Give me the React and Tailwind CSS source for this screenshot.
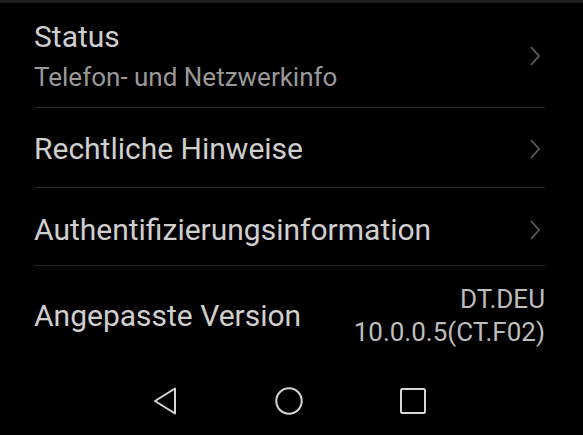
import React from 'react';

function Chevron() {
  return (
    <svg width="12" height="22" viewBox="0 0 12 22" className="shrink-0">
      <polyline points="2,2 10,11 2,20" fill="none" stroke="#5c5c5c" strokeWidth="1.8" />
    </svg>
  );
}

function Row({ title, subtitle, className }) {
  return (
    <div className={`flex items-center justify-between border-b border-[#262626] ${className}`}>
      <div className="flex flex-col">
        <span className="text-[30px] leading-[36px] text-[#cfcfcf]">{title}</span>
        {subtitle && <span className="text-[26px] leading-[34px] text-[#999999] mt-[5px]">{subtitle}</span>}
      </div>
      <div className="pr-[4px]">
        <Chevron />
      </div>
    </div>
  );
}

export default function App() {
  return (
    <div className="w-[583px] h-[435px] bg-black flex flex-col overflow-hidden" style={{ fontFamily: 'Roboto, "Noto Sans", sans-serif' }}>
      <div className="h-[3px] bg-[#1c1c1c]" />

      {/* Settings list */}
      <div className="flex flex-col pl-[34px] pr-[38px]">
        <Row title="Status" subtitle="Telefon- und Netzwerkinfo" className="h-[105px] pt-[2px]" />
        <Row title="Rechtliche Hinweise" className="h-[80px] pt-[3px]" />
        <Row title="Authentifizierungsinformation" className="h-[78px] pt-[6px]" />
        <div className="flex items-center justify-between h-[100px]">
          <span className="text-[30px] leading-[36px] text-[#cfcfcf]">Angepasste Version</span>
          <div className="flex flex-col items-end text-[26px] leading-[33px] text-[#bdbdbd]">
            <span>DT.DEU</span>
            <span>10.0.0.5(CT.F02)</span>
          </div>
        </div>
      </div>

      {/* Navigation bar */}
      <div className="flex-1 flex items-center justify-center pr-[5px]">
        <div className="w-[124px] flex justify-center">
          <svg width="26" height="28" viewBox="0 0 26 28">
            <polygon points="23,1.5 23,26.5 3,14" fill="none" stroke="#d6d6d6" strokeWidth="2" strokeLinejoin="round" />
          </svg>
        </div>
        <div className="w-[124px] flex justify-center">
          <svg width="28" height="28" viewBox="0 0 28 28">
            <circle cx="14" cy="14" r="12.7" fill="none" stroke="#d6d6d6" strokeWidth="2" />
          </svg>
        </div>
        <div className="w-[124px] flex justify-center">
          <svg width="26" height="26" viewBox="0 0 26 26">
            <rect x="1" y="1" width="24" height="24" rx="1.5" fill="none" stroke="#d6d6d6" strokeWidth="2" />
          </svg>
        </div>
      </div>
    </div>
  );
}
